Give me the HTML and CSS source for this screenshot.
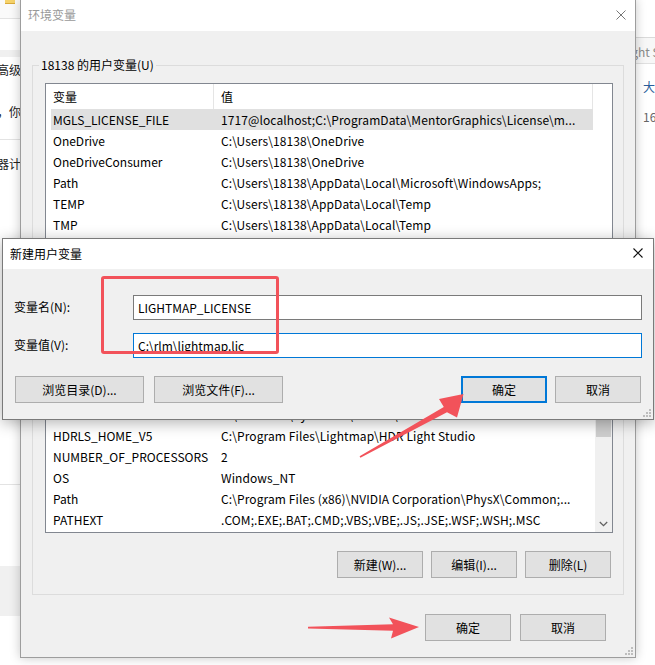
FILE: index.html
```html
<!DOCTYPE html>
<html lang="zh-CN">
  <head>
    <meta charset="UTF-8" />
    <title>环境变量</title>
    <link rel="stylesheet" href="styles.css">
  </head>
  <body>
    <!-- windows further back on the desktop, only their edges show -->
    <div class="back">
      <div class="back-left">
        <div class="bl-top"><span class="folder"></span></div>
        <div class="bl-gap"></div>
        <div class="bl-band"></div>
        <div class="bl-text bl-a"><span>高级</span></div>
        <div class="bl-text bl-b"><span>，你</span></div>
        <div class="bl-text bl-c"><span>器计</span></div>
        <div class="bl-d"></div>
        <div class="bl-e"></div>
        <div class="bl-band bl-f"></div>
      </div>
      <div class="back-right">
        <div class="br-top"></div>
        <div class="br-band"><span>ight S</span></div>
        <div class="br-line br-blue">大小</div>
        <div class="br-line">16</div>
      </div>
    </div>

    <div class="win env">
      <div class="titlebar">
        <span class="title">环境变量</span>
        <svg class="close" width="10" height="10" viewBox="0 0 10 10"><path d="M0.5 0.5L9.5 9.5M9.5 0.5L0.5 9.5" stroke="#777" stroke-width="1"/></svg>
      </div>
      <div class="client">
        <fieldset class="group">
          <legend>18138 的用户变量(U)</legend>
          <div class="group-body">
            <div class="lv">
              <div class="lv-head"><span>变量</span><span>值</span></div>
              <div class="lv-row sel"><span>MGLS_LICENSE_FILE</span><span>1717@localhost;C:\ProgramData\MentorGraphics\License\m...</span></div>
              <div class="lv-row"><span>OneDrive</span><span>C:\Users\18138\OneDrive</span></div>
              <div class="lv-row"><span>OneDriveConsumer</span><span>C:\Users\18138\OneDrive</span></div>
              <div class="lv-row"><span>Path</span><span>C:\Users\18138\AppData\Local\Microsoft\WindowsApps;</span></div>
              <div class="lv-row"><span>TEMP</span><span>C:\Users\18138\AppData\Local\Temp</span></div>
              <div class="lv-row"><span>TMP</span><span>C:\Users\18138\AppData\Local\Temp</span></div>
            </div>
            <div class="btn-row">
              <button class="btn">新建(N)...</button>
              <button class="btn">编辑(E)...</button>
              <button class="btn">删除(D)</button>
            </div>
          </div>
        </fieldset>

        <fieldset class="group group-sys">
          <legend>系统变量(S)</legend>
          <div class="group-body">
            <div class="lv lv-sys">
              <div class="lv-main">
                <div class="lv-head"><span>变量</span><span>值</span></div>
                <div class="lv-rows">
                  <div class="lv-row"><span>DriverData</span><span>C:\Windows\System32\Drivers\DriverData</span></div>
                  <div class="lv-row"><span>HDRLS_HOME_V5</span><span>C:\Program Files\Lightmap\HDR Light Studio</span></div>
                  <div class="lv-row"><span>NUMBER_OF_PROCESSORS</span><span>2</span></div>
                  <div class="lv-row"><span>OS</span><span>Windows_NT</span></div>
                  <div class="lv-row"><span>Path</span><span>C:\Program Files (x86)\NVIDIA Corporation\PhysX\Common;...</span></div>
                  <div class="lv-row"><span>PATHEXT</span><span>.COM;.EXE;.BAT;.CMD;.VBS;.VBE;.JS;.JSE;.WSF;.WSH;.MSC</span></div>
                </div>
              </div>
              <div class="vscroll">
                <div class="vs-up"></div>
                <div class="vs-thumb"></div>
                <div class="vs-down">
                  <svg width="9" height="6" viewBox="0 0 9 6"><path d="M0.8 1L4.5 4.6L8.2 1" fill="none" stroke="#606060" stroke-width="1.3"/></svg>
                </div>
              </div>
            </div>
            <div class="btn-row">
              <button class="btn">新建(W)...</button>
              <button class="btn">编辑(I)...</button>
              <button class="btn">删除(L)</button>
            </div>
          </div>
        </fieldset>

        <div class="foot">
          <button class="btn">确定</button>
          <button class="btn">取消</button>
        </div>
      </div>
      <svg class="grip" width="8" height="8" viewBox="0 0 8 8"><path d="M6 0h2v2h-2zM3 3h2v2h-2zM6 3h2v2h-2zM0 6h2v2h-2zM3 6h2v2h-2zM6 6h2v2h-2z" fill="#bdbdbd"/></svg>
    </div>

    <div class="win dlg">
      <div class="titlebar dlg-title">
        <span class="title">新建用户变量</span>
        <svg class="close" width="10" height="10" viewBox="0 0 10 10"><path d="M0.5 0.5L9.5 9.5M9.5 0.5L0.5 9.5" stroke="#111" stroke-width="1.1"/></svg>
      </div>
      <div class="dlg-body">
        <div class="fields">
          <label for="varname">变量名(N):</label>
          <input id="varname" type="text" value="LIGHTMAP_LICENSE" />
          <label for="varvalue">变量值(V):</label>
          <input id="varvalue" class="focus" type="text" value="C:\rlm\lightmap.lic" />
        </div>
        <div class="dlg-btns">
          <button class="btn btn-wide">浏览目录(D)...</button>
          <button class="btn btn-wide">浏览文件(F)...</button>
          <div class="dlg-ok">
            <button class="btn btn-default">确定</button>
            <button class="btn">取消</button>
          </div>
        </div>
      </div>
      <svg class="grip" width="8" height="8" viewBox="0 0 8 8"><path d="M6 0h2v2h-2zM3 3h2v2h-2zM6 3h2v2h-2zM0 6h2v2h-2zM3 6h2v2h-2zM6 6h2v2h-2z" fill="#bdbdbd"/></svg>
    </div>

    <!-- hand-drawn marks on top -->
    <div class="note"></div>
    <svg class="arrows" width="655" height="665" viewBox="0 0 655 665">
      <polygon points="359.6,456.3 443.8,407.0 439,399 463.5,394 457,417.5 447.0,412.2 360.4,457.7" fill="#f2525a"/>
      <polygon points="308,626.8 393,624.3 389,617.5 419,627 391,638.5 393,630.7 308,628.6" fill="#f2525a"/>
    </svg>
  </body>
</html>
```

FILE: styles.css
```css
* {
  box-sizing: border-box;
}
html, body {
  margin: 0;
}
body {
  position: relative;
  width: 655px;
  height: 665px;
  overflow: hidden;
  background: #fff;
  font-family: "Noto Sans CJK SC", sans-serif;
  font-size: 12px;
  color: #000;
}

/* desktop behind */
.back {
  position: absolute;
  inset: 0;
  display: flex;
  justify-content: space-between;
}
.back-left {
  width: 21px;
  display: flex;
  flex-direction: column;
  color: #222;
}
.bl-top {
  height: 19px;
  background: #fafafa;
  border-bottom: 1px solid #e3e3e3;
}
.folder {
  display: block;
  margin-left: 5px;
  width: 10px;
  height: 4px;
  background: #f6d36b;
  border-bottom: 1px solid #d9a93a;
}
.bl-gap {
  height: 31px;
}
.bl-band {
  height: 7px;
  background: #f0f0f0;
}
.bl-text {
  display: flex;
  justify-content: flex-end;
  overflow: hidden;
  white-space: nowrap;
}
.bl-a {
  height: 26px;
  line-height: 25px;
}
.bl-b {
  height: 57px;
  line-height: 57px;
  border-bottom: 1px solid #e3e3e3;
}
.bl-c {
  height: 48px;
  line-height: 47px;
}
.bl-d {
  height: 297px;
  border-bottom: 1px solid #e3e3e3;
}
.bl-e {
  height: 81px;
}
.bl-f {
  height: 50px;
}
.back-right {
  width: 20px;
  display: flex;
  flex-direction: column;
  white-space: nowrap;
  overflow: hidden;
}
.br-top {
  height: 38px;
  border-bottom: 1px solid #dadada;
}
.br-band {
  height: 26px;
  padding-top: 3px;
  line-height: 21px;
  background: #f7f7f7;
  border-bottom: 1px solid #e0e0e0;
  color: #8a8a8a;
  text-indent: -7px;
}
.br-line {
  height: 30px;
  line-height: 29px;
  padding-left: 8px;
  color: #666;
}
.br-blue {
  margin-top: 8px;
  color: #2a5d9a;
}

/* windows */
.win {
  position: absolute;
  background: #f0f0f0;
}
.env {
  left: 20px;
  top: -1px;
  width: 616px;
  border: 1px solid #9d9d9d;
  box-shadow: 0 0 10px rgba(0, 0, 0, 0.22);
}
.titlebar {
  display: flex;
  align-items: center;
  height: 31px;
  padding: 0 0 2px 7px;
  background: #fff;
}
.env .title {
  color: #999;
}
.close {
  margin-left: auto;
  margin-right: 9px;
}
.client {
  padding: 0 11px 16px;
}
.group {
  margin: 26px 0 0;
  padding: 0;
  min-width: 0;
  border: 1px solid #dcdcdc;
}
.group legend {
  margin-left: 6px;
  padding: 0 2px;
  line-height: 16px;
}
.group-sys {
  margin-top: 10px;
}
.group-body {
  padding: 10px 10px 18px 12px;
}
.group-sys .group-body {
  padding-bottom: 16px;
}

/* list views */
.lv {
  height: 174px;
  overflow: hidden;
  background: #fff;
  border: 1px solid #828790;
}
.lv-head {
  display: grid;
  grid-template-columns: 168px 379px;
  height: 25px;
  flex-shrink: 0;
}
.lv-head span {
  padding-left: 7px;
  line-height: 25px;
  border-right: 1px solid #e5e5e5;
}
.lv-row {
  display: grid;
  grid-template-columns: 163px 379px;
  width: 542px;
  height: 21px;
  margin-left: 5px;
  line-height: 21px;
  white-space: nowrap;
  flex-shrink: 0;
}
.lv-row span {
  overflow: hidden;
}
.lv-row span:first-child {
  padding-left: 2px;
}
.lv-row span + span {
  padding-left: 7px;
  letter-spacing: 0.1px;
}
.lv-row.sel {
  background: #e0e0e0;
}
.lv-sys {
  height: 176px;
  display: flex;
}
.lv-main {
  flex: 1;
  min-width: 0;
  display: flex;
  flex-direction: column;
}
.lv-rows {
  flex: 1;
  display: flex;
  flex-direction: column;
  justify-content: flex-end;
  overflow: hidden;
  padding-bottom: 2px;
}
.vscroll {
  width: 17px;
  display: flex;
  flex-direction: column;
  background: #f0f0f0;
}
.vs-up {
  height: 17px;
}
.vs-thumb {
  height: 42px;
  margin: 20px 1px 0;
  background: #cdcdcd;
}
.vs-down {
  height: 17px;
  margin-top: auto;
  display: flex;
  align-items: center;
  justify-content: center;
}

/* buttons */
.btn {
  width: 86px;
  height: 27px;
  padding: 0;
  border: 1px solid #adadad;
  background: #e1e1e1;
  font: inherit;
  color: #000;
}
.btn-row {
  display: flex;
  justify-content: flex-end;
  gap: 8px;
  margin: 18px 2px 0 0;
}
.foot {
  display: flex;
  justify-content: flex-end;
  gap: 9px;
  margin-top: 19px;
  padding-right: 18px;
}
.grip {
  position: absolute;
  right: 2px;
  bottom: 2px;
}

/* new variable dialog */
.dlg {
  left: 2px;
  top: 238px;
  width: 652px;
  height: 182px;
  border: 1px solid #7a7a7a;
  box-shadow: 0 3px 14px rgba(0, 0, 0, 0.3);
}
.dlg-title {
  height: 30px;
}
.dlg .close {
  margin-right: 10px;
}
.dlg-body {
  padding: 26px 11px 16px;
}
.fields {
  display: grid;
  grid-template-columns: 119px 1fr;
  grid-auto-rows: 25px;
  row-gap: 13px;
  align-items: center;
}
.fields label {
  padding-bottom: 2px;
}
.fields input {
  height: 25px;
  margin: 0;
  padding: 0 4px;
  border: 1px solid #7a7a7a;
  background: #fff;
  font: inherit;
  color: #000;
  outline: none;
}
.fields input.focus {
  border-color: #0078d7;
}
.dlg-btns {
  display: flex;
  gap: 10px;
  margin-top: 18px;
  padding: 0 1px;
}
.btn-wide {
  width: 129px;
}
.dlg-ok {
  display: flex;
  gap: 8px;
  margin-left: auto;
}
.btn-default {
  border: 2px solid #0078d7;
}

/* annotations */
.note {
  position: absolute;
  left: 101px;
  top: 276px;
  width: 178px;
  height: 78px;
  border: 3px solid #f2525a;
  border-radius: 3px;
}
.arrows {
  position: absolute;
  left: 0;
  top: 0;
  pointer-events: none;
}
```
